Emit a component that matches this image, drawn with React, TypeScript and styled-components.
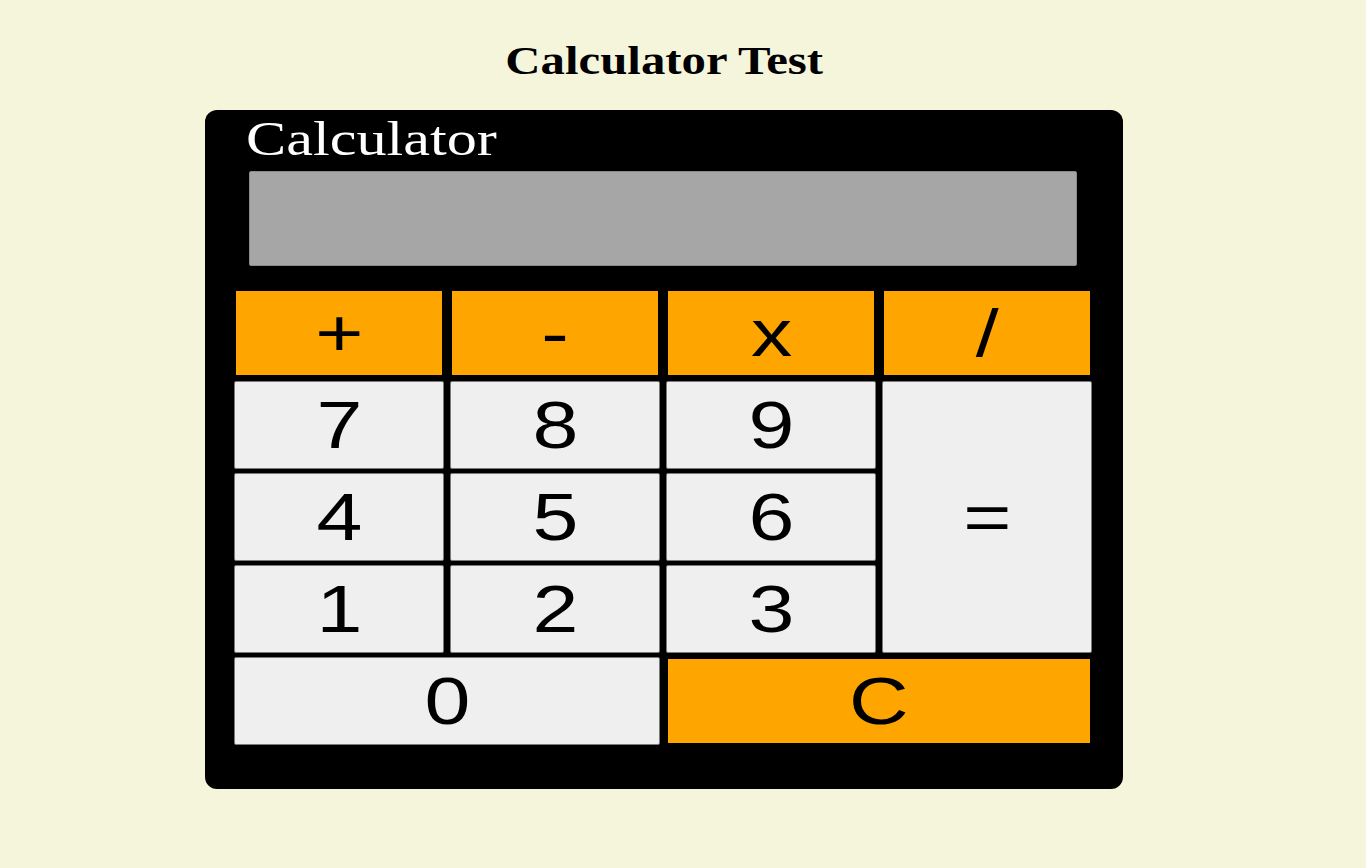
import React from 'react';
import styled, { createGlobalStyle } from 'styled-components';

type Key = {
  label: string;
  accent?: boolean;
  span?: number;
  rows?: number;
};

const keys: Key[] = [
  { label: '+', accent: true },
  { label: '-', accent: true },
  { label: 'x', accent: true },
  { label: '/', accent: true },
  { label: '7' },
  { label: '8' },
  { label: '9' },
  { label: '=', rows: 3 },
  { label: '4' },
  { label: '5' },
  { label: '6' },
  { label: '1' },
  { label: '2' },
  { label: '3' },
  { label: '0', span: 2 },
  { label: 'C', accent: true, span: 2 },
];

const GlobalStyle = createGlobalStyle`
  html, body {
    margin: 0;
    padding: 0;
    background: #f5f5dc;
  }
`;

const Page = styled.div`
  width: 1328px;
  display: flex;
  flex-direction: column;
  align-items: center;
`;

const Title = styled.h1`
  margin: 41px 0 0;
  font-family: 'Liberation Serif', 'Times New Roman', serif;
  font-weight: bold;
  font-size: 40px;
  line-height: 40px;
  color: #000;
  transform: scaleX(1.22);
`;

const Calculator = styled.div`
  margin-top: 29px;
  width: 918px;
  box-sizing: border-box;
  background: #000;
  border-radius: 12px;
  padding: 5px 31px 44px 29px;
`;

const Heading = styled.div`
  margin-left: 12px;
  font-family: 'Liberation Serif', 'Times New Roman', serif;
  font-size: 48px;
  line-height: 48px;
  color: #fff;
  transform: scaleX(1.255);
  transform-origin: left center;
`;

const Display = styled.div`
  margin: 8px 15px 0;
  height: 95px;
  background: #a6a6a6;
  border: 1px solid #8a8a8a;
  border-radius: 2px;
  box-sizing: border-box;
`;

const Keypad = styled.div`
  margin-top: 23px;
  display: grid;
  grid-template-columns: repeat(4, 210px);
  grid-auto-rows: 88px;
  column-gap: 6px;
  row-gap: 4px;
`;

const KeyButton = styled.button<{ $accent?: boolean; $span?: number; $rows?: number }>`
  grid-column: span ${(p) => p.$span ?? 1};
  grid-row: span ${(p) => p.$rows ?? 1};
  margin: 0;
  padding: 0;
  box-sizing: border-box;
  display: flex;
  align-items: center;
  justify-content: center;
  font-family: 'Liberation Sans', Arial, sans-serif;
  font-size: 66px;
  color: #000;
  background: ${(p) => (p.$accent ? '#ffa500' : '#efefef')};
  border: ${(p) => (p.$accent ? '2px solid #000' : '1px solid #7a7a7a')};
  border-radius: ${(p) => (p.$accent ? '0' : '2px')};
`;

const KeyLabel = styled.span`
  display: inline-block;
  transform: scaleX(1.25);
`;

export default function App() {
  return (
    <>
      <GlobalStyle />
      <Page>
        <Title>Calculator Test</Title>
        <Calculator>
          <Heading>Calculator</Heading>
          <Display />
          <Keypad>
            {keys.map((k) => (
              <KeyButton key={k.label} $accent={k.accent} $span={k.span} $rows={k.rows}>
                <KeyLabel>{k.label}</KeyLabel>
              </KeyButton>
            ))}
          </Keypad>
        </Calculator>
      </Page>
    </>
  );
}
